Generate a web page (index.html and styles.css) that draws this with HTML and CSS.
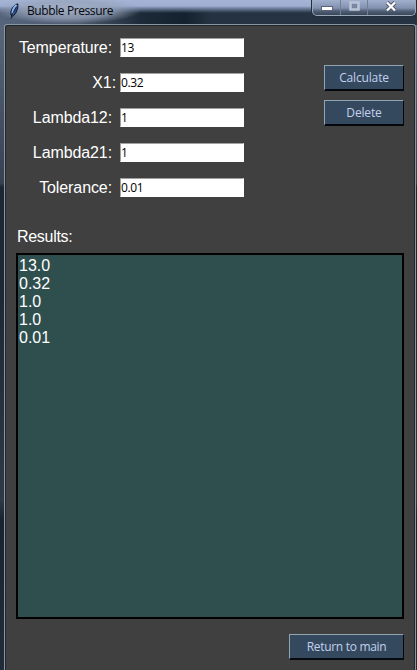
FILE: index.html
```
<!DOCTYPE html>
<html lang="en">
<head>
<meta charset="utf-8">
<title>Bubble Pressure</title>
<link rel="stylesheet" href="styles.css">
</head>
<body>
<div class="window">
  <header class="titlebar">
    <svg class="feather" width="12" height="16" viewBox="0 0 12 16">
      <path d="M2 12C1 7 4.500 2 8.800 .800C9.500 5 7.500 10.500 3.500 13.500Z" fill="#2d4f8d" stroke="#07101f" stroke-width=".9"/>
      <path d="M3.500 10.500C3.500 7 5 4 7.500 2" stroke="#8fb9f2" stroke-width="1.900" fill="none"/>
      <path d="M2 16C2.500 12 4.500 8.500 7.500 4" stroke="#111827" stroke-width=".8" fill="none"/>
    </svg>
    <h1 class="title">Bubble Pressure</h1>
    <div class="controls">
      <span class="control minimize"><svg width="12" height="5" viewBox="0 0 12 5"><rect x=".5" y=".5" width="11" height="4" fill="#fff" stroke="#59647b"/></svg></span>
      <span class="control maximize"><svg width="11" height="10" viewBox="0 0 11 10"><rect x="1.500" y="1.500" width="8" height="7" fill="#7c8aa8" stroke="#bbc5d8" stroke-width="2.500"/><rect x="3.500" y="3.500" width="4" height="3" fill="none" stroke="#7885a0"/></svg></span>
      <span class="control close"><svg width="12" height="11" viewBox="0 0 12 11"><path d="M2 1.500L10 9.500M10 1.500L2 9.500" stroke="#485267" stroke-width="4"/><path d="M2 1.500L10 9.500M10 1.500L2 9.500" stroke="#fff" stroke-width="2.400"/></svg></span>
    </div>
  </header>
  <main class="client">
    <div class="top">
      <div class="fields">
        <label class="field"><span class="name">Temperature:</span><input class="entry" value="13"></label>
        <label class="field"><span class="name wide">X1:</span><input class="entry" value="0.32"></label>
        <label class="field"><span class="name">Lambda12:</span><input class="entry" value="1"></label>
        <label class="field"><span class="name">Lambda21:</span><input class="entry" value="1"></label>
        <label class="field"><span class="name">Tolerance:</span><input class="entry" value="0.01"></label>
      </div>
      <div class="actions">
        <button class="button">Calculate</button>
        <button class="button">Delete</button>
      </div>
    </div>
    <h2 class="heading">Results:</h2>
    <div class="results"><div>13.0</div><div>0.32</div><div>1.0</div><div>1.0</div><div>0.01</div></div>
    <button class="button return">Return to main</button>
  </main>
</div>
</body>
</html>
```
FILE: styles.css
```
* { box-sizing: border-box; }
body { margin: 0; overflow: hidden; }
.window {
  width: 417px;
  height: 670px;
  padding: 0 1px 0 4px;
  display: flex;
  flex-direction: column;
  background:
    radial-gradient(ellipse 74px 14px at 68px 10px, rgba(166,177,198,.9) 0, rgba(150,163,186,.75) 60%, rgba(120,135,160,0) 100%) 0 0 / 150px 25px no-repeat,
    linear-gradient(#a5b4d5 0, #9fafd2 6px, rgba(120,138,170,.75) 9px, rgba(35,48,65,0) 13px) 0 0 / 417px 24px no-repeat,
    linear-gradient(90deg, #56647b 0, #4b596d 80px, #1d2b39 140px, #14212e 185px, #243241 210px, #253342 417px) 0 0 / 417px 25px no-repeat,
    linear-gradient(#59677d 25px, #465264 110px, #364252 183px, #1b2833 187px, #1c2934 300px, #2d3945 500px, #18232f 520px, #202d38 670px);
}
.titlebar { height: 24px; flex: none; display: flex; align-items: flex-start; }
.feather { margin: 3px 0 0 5px; }
.title {
  margin: 3px 0 0 6px;
  font: 400 12px/16px "Open Sans", "Noto Sans", sans-serif;
  letter-spacing: -.4px;
  color: #05080d;
  white-space: nowrap;
}
.controls {
  display: flex;
  width: 104px;
  height: 16px;
  margin: 0 0 0 auto;
  border: 1px solid #9ba7b9;
  border-top: 0;
  border-radius: 0 0 5px 5px;
  background: linear-gradient(#a2b0d0, #8291ae 8px, #526077 11px, #394659);
  box-shadow: 0 0 0 1px #222e3d;
}
.control { display: flex; align-items: flex-start; justify-content: center; width: 28px; border-right: 1px solid #717e93; }
.minimize svg { margin-top: 6px; }
.maximize { width: 27px; }
.maximize svg { margin-top: 1px; }
.close { width: 47px; border: 0; }
.close svg { margin: 1px 2px 0 0; }
.client {
  height: 646px;
  display: flex;
  flex-direction: column;
  padding: 12px 11px 0 11px;
  border: solid #8998a5;
  border-width: 1px 1px 0;
  border-radius: 3px 3px 0 0;
  background: #404040;
  box-shadow: inset 1px 1px #22272c, inset -1px 0 #22272c;
}
.top { display: flex; justify-content: space-between; padding-top: 1px; }
.fields { display: flex; flex-direction: column; gap: 16px; }
.field { display: flex; height: 19px; }
.name { width: 104px; padding-right: 8px; text-align: right; font: 16px/20px "Liberation Sans", Arial, sans-serif; letter-spacing: -.1px; color: #fff; white-space: nowrap; }
.wide { padding-right: 4px; }
.entry {
  width: 124px;
  height: 19px;
  padding: 0 0 1px;
  border: 1px solid;
  border-color: #a0a0a0 #fff #fff #a0a0a0;
  border-radius: 0;
  background: #fff;
  color: #000;
  font: 12px/16px "Open Sans", "Noto Sans", sans-serif;
  letter-spacing: -.4px;
  outline: 0;
}
.actions { display: flex; flex-direction: column; gap: 9px; padding-top: 27px; }
.button {
  width: 80px;
  height: 26px;
  padding: 1px 0 0;
  border: solid;
  border-width: 1px 1px 2px 1px;
  border-color: #91a4b2 #05080d #05080d #91a4b2;
  border-radius: 0;
  background: #34495e;
  color: #c3d0ed;
  font: 12px/20px "Open Sans", "Noto Sans", sans-serif;
  letter-spacing: -.15px;
}
.heading { margin: 30px 0 0 1px; font: 16px/19px "Liberation Sans", Arial, sans-serif; letter-spacing: -.3px; color: #fff; }
.results {
  width: 388px;
  height: 366px;
  margin-top: 7px;
  padding: 2px 1px;
  border: 2px solid #000;
  background: #2f4f4f;
  color: #fff;
  font: 16px/18px "Liberation Sans", Arial, sans-serif;
}
.return { width: 115px; margin: 15px 0 0; align-self: flex-end; letter-spacing: -.3px; }
```
